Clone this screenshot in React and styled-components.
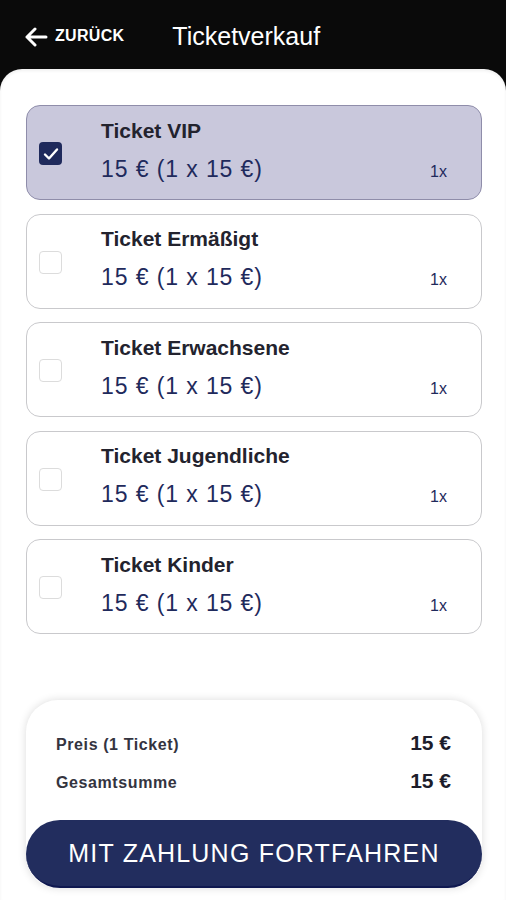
import React, { useState } from 'react'
import styled, { createGlobalStyle } from 'styled-components'

const GlobalStyle = createGlobalStyle`
  html, body {
    margin: 0;
    padding: 0;
    background: #0a0a0a;
  }
  * {
    box-sizing: border-box;
  }
`

const tickets = [
  { id: 'vip', name: 'Ticket VIP' },
  { id: 'erm', name: 'Ticket Ermäßigt' },
  { id: 'erw', name: 'Ticket Erwachsene' },
  { id: 'jug', name: 'Ticket Jugendliche' },
  { id: 'kin', name: 'Ticket Kinder' },
]

export default function App() {
  const [selected, setSelected] = useState('vip')

  return (
    <Page>
      <GlobalStyle />
      <Header>
        <BackButton>
          <svg width="24" height="20" viewBox="0 0 24 20" fill="none">
            <path d="M22 10H3M11 2L3 10l8 8" stroke="#fff" strokeWidth="3" strokeLinecap="round" strokeLinejoin="round" />
          </svg>
          <BackLabel>ZURÜCK</BackLabel>
        </BackButton>
        <Title>Ticketverkauf</Title>
      </Header>

      <Sheet>
        <TicketList>
          {tickets.map(t => (
            <TicketCard key={t.id} active={selected === t.id} onClick={() => setSelected(t.id)}>
              <Check active={selected === t.id}>
                {selected === t.id && (
                  <svg width="16" height="14" viewBox="0 0 16 14" fill="none">
                    <path d="M2 7.5l4 4L14 2.5" stroke="#fff" strokeWidth="2.4" strokeLinecap="round" strokeLinejoin="round" />
                  </svg>
                )}
              </Check>
              <TicketInfo>
                <TicketName>{t.name}</TicketName>
                <PriceRow>
                  <Price>15 € (1 x 15 €)</Price>
                  <Qty>1x</Qty>
                </PriceRow>
              </TicketInfo>
            </TicketCard>
          ))}
        </TicketList>

        <Summary>
          <SummaryRow>
            <SummaryLabel>Preis (1 Ticket)</SummaryLabel>
            <SummaryValue>15 €</SummaryValue>
          </SummaryRow>
          <SummaryRow>
            <SummaryLabel>Gesamtsumme</SummaryLabel>
            <SummaryValue>15 €</SummaryValue>
          </SummaryRow>
          <PayButton>MIT ZAHLUNG FORTFAHREN</PayButton>
        </Summary>
      </Sheet>
    </Page>
  )
}

const Page = styled.div`
  min-height: 900px;
  display: flex;
  flex-direction: column;
  background: #0a0a0a;
  font-family: 'Liberation Sans', Arial, sans-serif;
`

const Header = styled.div`
  height: 69px;
  display: flex;
  align-items: center;
  padding: 5px 0 0 24px;
`

const BackButton = styled.div`
  display: flex;
  align-items: center;
  gap: 7px;
  cursor: pointer;
`

const BackLabel = styled.span`
  color: #fff;
  font-weight: bold;
  font-size: 16px;
  letter-spacing: 0.3px;
  padding-bottom: 3px;
`

const Title = styled.h1`
  margin: 0 0 0 48px;
  color: #fff;
  font-size: 25px;
  font-weight: normal;
  padding-bottom: 1px;
`

const Sheet = styled.div`
  flex: 1;
  display: flex;
  flex-direction: column;
  background: #fff;
  border-radius: 22px 22px 0 0;
  box-shadow: inset 0 2px 3px rgba(0, 0, 0, 0.06);
  padding: 36px 24px 12px 26px;
`

const TicketList = styled.div`
  display: flex;
  flex-direction: column;
  gap: 13.5px;
`

const TicketCard = styled.div`
  height: 95px;
  display: flex;
  align-items: center;
  padding: 0 34px 0 12px;
  border-radius: 14px;
  border: 1px solid ${p => (p.active ? '#8f8daa' : '#c9c9cc')};
  background: ${p => (p.active ? '#c9c8dc' : '#fff')};
  cursor: pointer;
`

const Check = styled.div`
  width: 23px;
  height: 23px;
  flex-shrink: 0;
  border-radius: 4px;
  display: flex;
  align-items: center;
  justify-content: center;
  background: ${p => (p.active ? '#1f2a5c' : '#fff')};
  border: ${p => (p.active ? 'none' : '1.5px solid #dcdcdc')};
  margin-top: 2px;
`

const TicketInfo = styled.div`
  flex: 1;
  margin-left: 39px;
  display: flex;
  flex-direction: column;
  gap: 12px;
  margin-top: -4px;
`

const TicketName = styled.div`
  font-size: 21px;
  line-height: 24px;
  font-weight: bold;
  color: #23232e;
`

const PriceRow = styled.div`
  display: flex;
  align-items: baseline;
  justify-content: space-between;
`

const Price = styled.div`
  font-size: 23px;
  line-height: 28px;
  letter-spacing: 0.9px;
  color: #1f2a5c;
`

const Qty = styled.div`
  font-size: 16px;
  color: #1f2a5c;
`

const Summary = styled.div`
  margin-top: auto;
  display: flex;
  flex-direction: column;
  border-radius: 32px;
  background: #fff;
  box-shadow: 0 0 9px rgba(0, 0, 0, 0.14);
  padding-top: 31px;
`

const SummaryRow = styled.div`
  display: flex;
  justify-content: space-between;
  align-items: baseline;
  padding: 0 31px 0 30px;
  line-height: 24px;
  margin-bottom: 12px;
`

const SummaryLabel = styled.span`
  font-size: 16px;
  font-weight: bold;
  letter-spacing: 0.6px;
  color: #34343f;
`

const SummaryValue = styled.span`
  font-size: 21px;
  font-weight: bold;
  color: #1d1d2b;
`

const PayButton = styled.button`
  margin-top: 13px;
  height: 68px;
  width: 100%;
  border: none;
  border-bottom: 2px solid #0f1850;
  border-radius: 34px;
  background: #222d5e;
  color: #fff;
  font-family: 'Liberation Sans', Arial, sans-serif;
  font-size: 25px;
  letter-spacing: 1.2px;
  cursor: pointer;
`
